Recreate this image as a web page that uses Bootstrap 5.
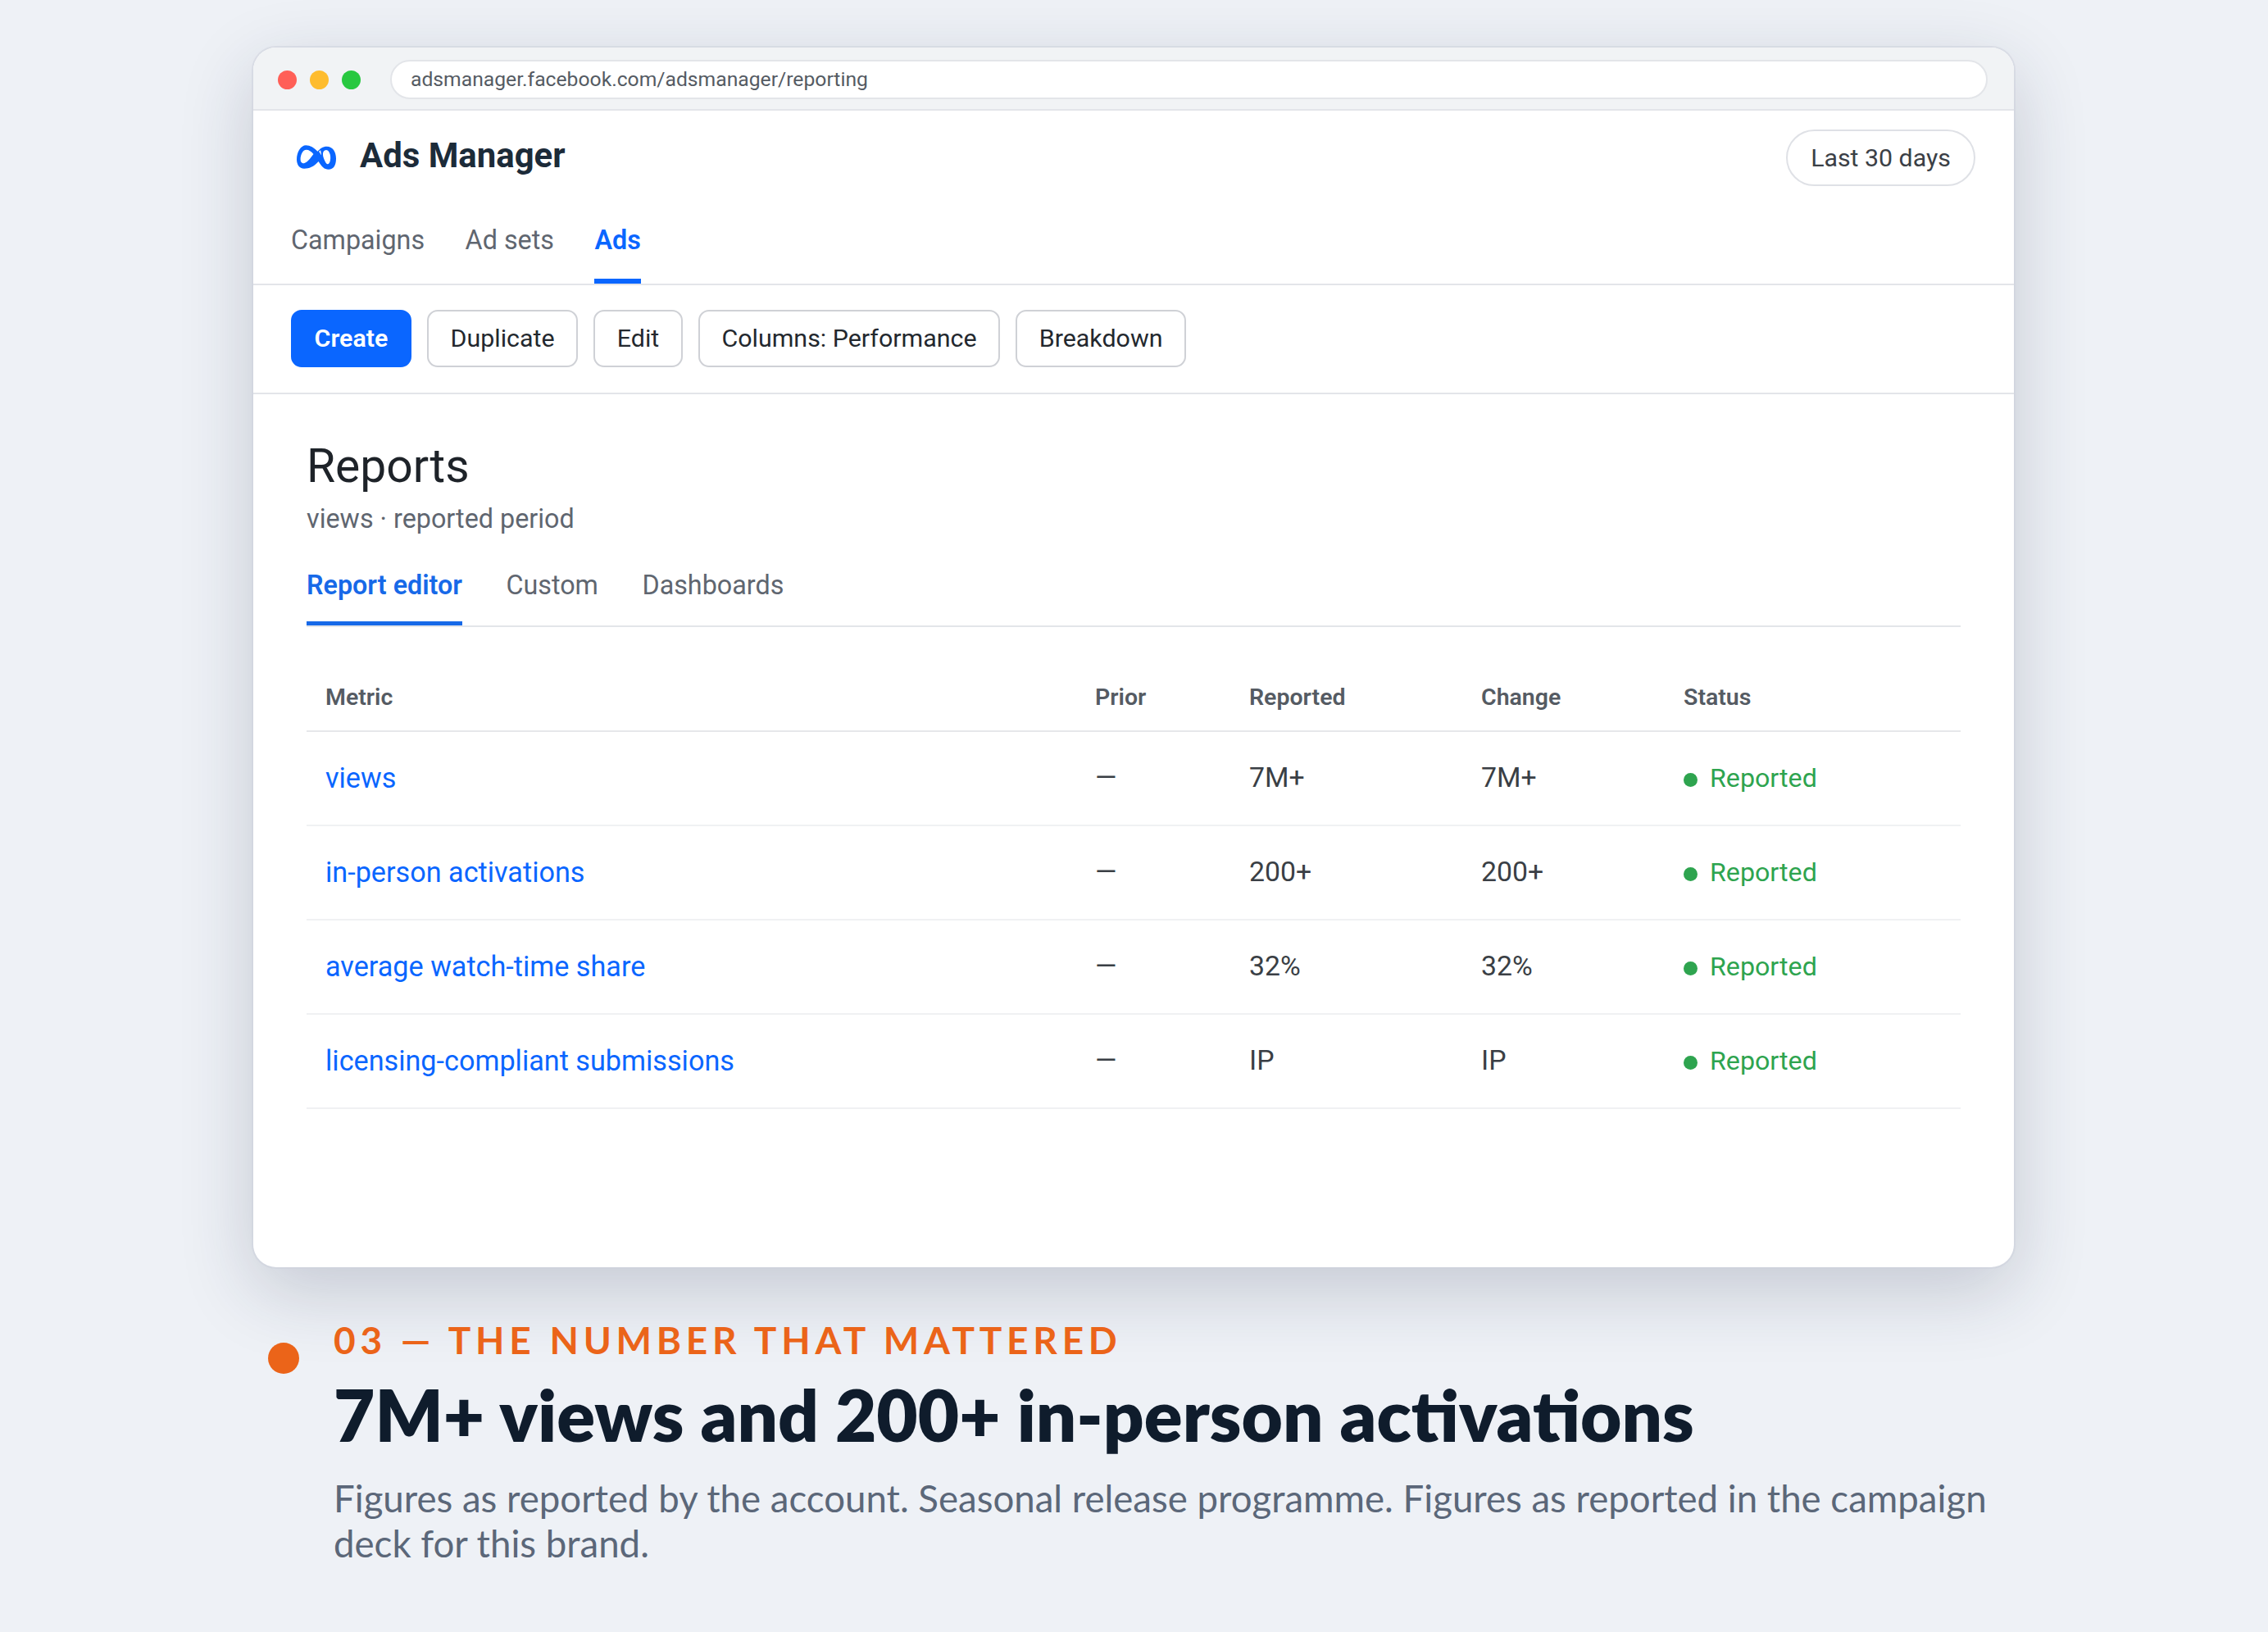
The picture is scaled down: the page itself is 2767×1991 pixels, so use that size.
<!DOCTYPE html>
<html lang="en">
<head>
    <meta charset="UTF-8">
    <meta name="viewport" content="width=device-width, initial-scale=1.0">
    <title>Ads Manager - Reports</title>
    <link rel="stylesheet" href="https://cdn.jsdelivr.net/npm/bootstrap@5.3.0/dist/css/bootstrap.min.css">
    <style>
        body { background-color: #eef1f6; font-family: Roboto, sans-serif; color: #1c2b39; width: 2767px; height: 1991px; overflow: hidden; }
        .stage { padding: 58px 0 0 309px; }
        .shot { width: 2148px; height: 1488px; background: #fff; border-radius: 28px; box-shadow: 0 0 0 2px rgba(205,210,220,.55), 0 28px 90px rgba(30,40,70,.2); overflow: hidden; }
        .chrome-bar { height: 77px; background: #f1f3f5; border-bottom: 2px solid #e3e5e9; padding: 3px 32px 0 30px; gap: 16px; }
        .tl { width: 23px; height: 23px; border-radius: 50%; }
        .tl-red { background: #ff5f57; }
        .tl-yellow { background: #febc2e; }
        .tl-green { background: #28c840; }
        .url-box { flex: 1; height: 48px; margin-left: 20px; background: #fff; border: 2px solid #e3e5e9; border-radius: 24px; padding-left: 23px; font-size: 24.7px; color: #555b63; }
        .app-head { height: 213px; border-bottom: 2px solid #e3e5e9; padding: 0 46px; }
        .brand-row { height: 113px; padding-top: 23px; }
        .brand-logo { width: 48px; height: 30px; margin: -4px 29px 0 7px; }
        .brand-name { font-size: 41.9px; font-weight: 700; color: #1c2b39; margin-top: -7px; }
        .range-pill { width: 231px; height: 69px; border: 2px solid #dfe1e6; border-radius: 35px; font-size: 30.3px; color: #3b4046; background: #fff; padding: 0; margin-right: 1px; }
        .top-tabs { gap: 49.5px; margin-top: 0; }
        .top-tabs a { font-size: 32.3px; color: #5f6670; text-decoration: none; height: 98px; padding-top: 21px; display: block; }
        .top-tabs a.on { color: #0a66ff; font-weight: 600; box-shadow: inset 0 -6px 0 #0a66ff; }
        .tool-row { height: 133px; padding: 0 46px 1px; gap: 19px; border-bottom: 2px solid #e3e5e9; }
        .tool-btn { height: 70px; font-size: 30.4px; padding: 0 26.6px; border-radius: 13px; border: 2px solid #cfd1d6; background: #fff; color: #23282e; }
        .tool-btn-main { background: #0a66ff; border-color: #0a66ff; color: #fff; font-weight: 600; }
        .report-wrap { padding: 54px 65px 0 65px; }
        .report-title { font-size: 57px; font-weight: 400; color: #1e2329; margin: 0; line-height: 68px; }
        .report-sub { font-size: 32.3px; color: #5f6670; line-height: 44px; margin-top: 8px; }
        .sub-tabs { gap: 53.5px; border-bottom: 2px solid #e3e5e9; margin-top: 21px; }
        .sub-tabs a { font-size: 32.3px; color: #5f6670; text-decoration: none; height: 87px; padding-top: 14px; display: block; }
        .sub-tabs a.on { color: #1769e8; font-weight: 600; box-shadow: inset 0 -5px 0 #1769e8; }
        .report-table { table-layout: fixed; width: 2018px; margin: 47px 0 0; }
        .report-table th { height: 80px; padding: 0 23px; font-size: 28.5px; font-weight: 600; color: #555b63; border-bottom: 2px solid #e6e7ea; vertical-align: middle; }
        .report-table td { height: 115px; padding: 0 23px; font-size: 33.8px; color: #3a3f45; border-bottom: 2px solid #f0f1f3; vertical-align: middle; }
        .report-table a { color: #0a66ff; text-decoration: none; font-size: 34.2px; }
        .w-metric { width: 939px; }
        .w-prior { width: 188px; }
        .w-rep { width: 283px; }
        .w-chg { width: 247px; }
        .w-stat { width: 361px; }
        .report-table td.td-status { color: #2ea44f; font-size: 32.2px; }
        .st-dot { display: inline-block; width: 17px; height: 17px; border-radius: 50%; background: #2ea44f; margin-right: 15px; vertical-align: 0; }
        .caption-row { padding: 61px 0 0 327px; font-family: Lato, sans-serif; }
        .cap-dot { width: 38px; height: 38px; border-radius: 50%; background: #eb6419; margin-top: 31px; margin-right: 42px; flex: none; }
        .cap-kicker { font-size: 46px; font-weight: 700; color: #eb6419; letter-spacing: 5.75px; line-height: 56px; }
        .cap-head { font-size: 86.9px; font-weight: 800; color: #0f1c2c; line-height: 106px; margin: 10px 0 0; }
        .cap-text { font-size: 45.6px; color: #5b6779; line-height: 55px; width: 2040px; margin-top: 21px; }
    </style>
</head>
<body>
    <div class="stage">
        <div class="shot">
            <div class="chrome-bar d-flex align-items-center">
                <span class="tl tl-red"></span>
                <span class="tl tl-yellow"></span>
                <span class="tl tl-green"></span>
                <div class="url-box d-flex align-items-center">adsmanager.facebook.com/adsmanager/reporting</div>
            </div>
            <div class="app-head">
                <div class="brand-row d-flex justify-content-between align-items-start">
                    <div class="d-flex align-items-center mt-2">
                        <svg class="brand-logo" viewBox="0 0 47 29">
                            <path fill="#0a66ff" fill-rule="evenodd" d="M11 0C16 0 21 3 25 7.500C28 4 31 1.500 36 1.500C43 1.500 47 8 47 16C47 24 44 29 38 29C33 29 30 26 26 19.500C20 26 15 28 9 28C3 28 0 23 0 17C0 8 5 0 11 0ZM11.500 5.500C7 5.500 4.500 12 4.500 17C4.500 20 6 22 8.500 21.500C12 21 16 16 20 10.500C17.500 7.500 14.500 5.500 11.500 5.500ZM33 6.500C36.500 4 39 7.500 40 11.500C41 17 39.500 22.500 37 22.500C35 22.500 33 18 31.500 13C31 10 31.500 7.500 33 6.500ZM26.500 7.500L28.500 6L29.500 12Z"/>
                        </svg>
                        <span class="brand-name">Ads Manager</span>
                    </div>
                    <button class="btn range-pill">Last 30 days</button>
                </div>
                <nav class="top-tabs d-flex">
                    <a href="#">Campaigns</a>
                    <a href="#">Ad sets</a>
                    <a href="#" class="on">Ads</a>
                </nav>
            </div>
            <div class="tool-row d-flex align-items-center">
                <button class="btn tool-btn tool-btn-main">Create</button>
                <button class="btn tool-btn">Duplicate</button>
                <button class="btn tool-btn">Edit</button>
                <button class="btn tool-btn">Columns: Performance</button>
                <button class="btn tool-btn">Breakdown</button>
            </div>
            <div class="report-wrap">
                <h1 class="report-title">Reports</h1>
                <div class="report-sub">views · reported period</div>
                <nav class="sub-tabs d-flex">
                    <a href="#" class="on">Report editor</a>
                    <a href="#">Custom</a>
                    <a href="#">Dashboards</a>
                </nav>
                <table class="table report-table">
                    <thead>
                        <tr>
                            <th class="w-metric">Metric</th>
                            <th class="w-prior">Prior</th>
                            <th class="w-rep">Reported</th>
                            <th class="w-chg">Change</th>
                            <th class="w-stat">Status</th>
                        </tr>
                    </thead>
                    <tbody>
                        <tr><td><a href="#">views</a></td><td>—</td><td>7M+</td><td>7M+</td><td class="td-status"><span class="st-dot"></span>Reported</td></tr>
                        <tr><td><a href="#">in-person activations</a></td><td>—</td><td>200+</td><td>200+</td><td class="td-status"><span class="st-dot"></span>Reported</td></tr>
                        <tr><td><a href="#">average watch-time share</a></td><td>—</td><td>32%</td><td>32%</td><td class="td-status"><span class="st-dot"></span>Reported</td></tr>
                        <tr><td><a href="#">licensing-compliant submissions</a></td><td>—</td><td>IP</td><td>IP</td><td class="td-status"><span class="st-dot"></span>Reported</td></tr>
                    </tbody>
                </table>
            </div>
        </div>
    </div>
    <div class="caption-row d-flex align-items-start">
        <span class="cap-dot"></span>
        <div>
            <div class="cap-kicker">03 — THE NUMBER THAT MATTERED</div>
            <h2 class="cap-head">7M+ views and 200+ in-person activations</h2>
            <div class="cap-text">Figures as reported by the account. Seasonal release programme. Figures as reported in the campaign deck for this brand.</div>
        </div>
    </div>
    <script src="https://cdn.jsdelivr.net/npm/bootstrap@5.3.0/dist/js/bootstrap.bundle.min.js"></script>
</body>
</html>
